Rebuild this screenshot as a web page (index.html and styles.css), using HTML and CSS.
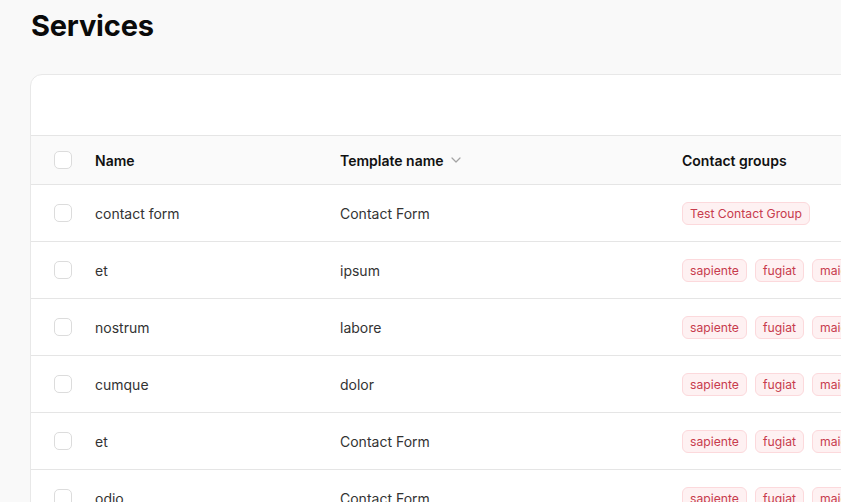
FILE: index.html
```html
<!DOCTYPE html>
<html>
<head>
<meta charset="utf-8">
<link rel="stylesheet" href="styles.css">
</head>
<body>
<main class="page">
  <h1 class="title">Services</h1>
  <section class="card">
    <div class="toolbar"></div>
    <div class="table">
      <div class="row head">
        <div class="cell check"><span class="box"></span></div>
        <div class="cell">Name</div>
        <div class="cell sort">Template name
          <svg class="chev" width="12" height="12" viewBox="0 0 12 12"><path d="M2 4l4 4 4-4" fill="none" stroke="#a3a3a3" stroke-width="1.2" stroke-linecap="round" stroke-linejoin="round"/></svg>
        </div>
        <div class="cell">Contact groups</div>
      </div>
      <div class="row">
        <div class="cell check"><span class="box"></span></div>
        <div class="cell">contact form</div>
        <div class="cell">Contact Form</div>
        <div class="cell tags"><span class="tag">Test Contact Group</span></div>
      </div>
      <div class="row">
        <div class="cell check"><span class="box"></span></div>
        <div class="cell">et</div>
        <div class="cell">ipsum</div>
        <div class="cell tags"><span class="tag">sapiente</span><span class="tag">fugiat</span><span class="tag">maiores</span></div>
      </div>
      <div class="row">
        <div class="cell check"><span class="box"></span></div>
        <div class="cell">nostrum</div>
        <div class="cell">labore</div>
        <div class="cell tags"><span class="tag">sapiente</span><span class="tag">fugiat</span><span class="tag">maiores</span></div>
      </div>
      <div class="row">
        <div class="cell check"><span class="box"></span></div>
        <div class="cell">cumque</div>
        <div class="cell">dolor</div>
        <div class="cell tags"><span class="tag">sapiente</span><span class="tag">fugiat</span><span class="tag">maiores</span></div>
      </div>
      <div class="row">
        <div class="cell check"><span class="box"></span></div>
        <div class="cell">et</div>
        <div class="cell">Contact Form</div>
        <div class="cell tags"><span class="tag">sapiente</span><span class="tag">fugiat</span><span class="tag">maiores</span></div>
      </div>
      <div class="row">
        <div class="cell check"><span class="box"></span></div>
        <div class="cell">odio</div>
        <div class="cell">Contact Form</div>
        <div class="cell tags"><span class="tag">sapiente</span><span class="tag">fugiat</span><span class="tag">maiores</span></div>
      </div>
    </div>
  </section>
</main>
</body>
</html>
```

FILE: styles.css
```css
* { box-sizing: border-box; }
html, body { margin: 0; padding: 0; }
body {
  background: #f9f9f9;
  font-family: Inter, "Noto Sans", sans-serif;
  color: #262626;
  overflow: hidden;
  height: 502px;
}
.page {
  padding: 6px 0 0 30px;
}
.title {
  margin: 0 0 0 1px;
  font-size: 29px;
  line-height: 40px;
  font-weight: 700;
  color: #0a0a0a;
  letter-spacing: -0.2px;
}
.card {
  margin-top: 28px;
  width: 1100px;
  background: #fff;
  border: 1px solid #e8e8e8;
  border-radius: 12px;
}
.toolbar {
  height: 61px;
  border-bottom: 1px solid #e5e5e5;
}
.row {
  display: grid;
  grid-template-columns: 64px 245px 342px 1fr;
  height: 57px;
  align-items: center;
  border-bottom: 1px solid #e5e5e5;
  font-size: 14px;
  color: #333;
}
.row.head {
  height: 49px;
  background: #fafafa;
  font-weight: 600;
  color: #111;
}
.cell { white-space: nowrap; display: flex; align-items: center; }
.check { padding-left: 23px; }
.box {
  width: 18px;
  height: 18px;
  border: 1px solid #dcdcdc;
  border-radius: 5px;
  background: #fff;
}
.sort { gap: 6px; }
.tags { gap: 8px; }
.tag {
  display: inline-flex;
  align-items: center;
  height: 23px;
  padding: 0 7px;
  border-radius: 6px;
  background: #fef1f2;
  border: 1px solid #fcd9dc;
  color: #c73b4d;
  font-size: 12.2px;
  font-weight: 400;
}
```
